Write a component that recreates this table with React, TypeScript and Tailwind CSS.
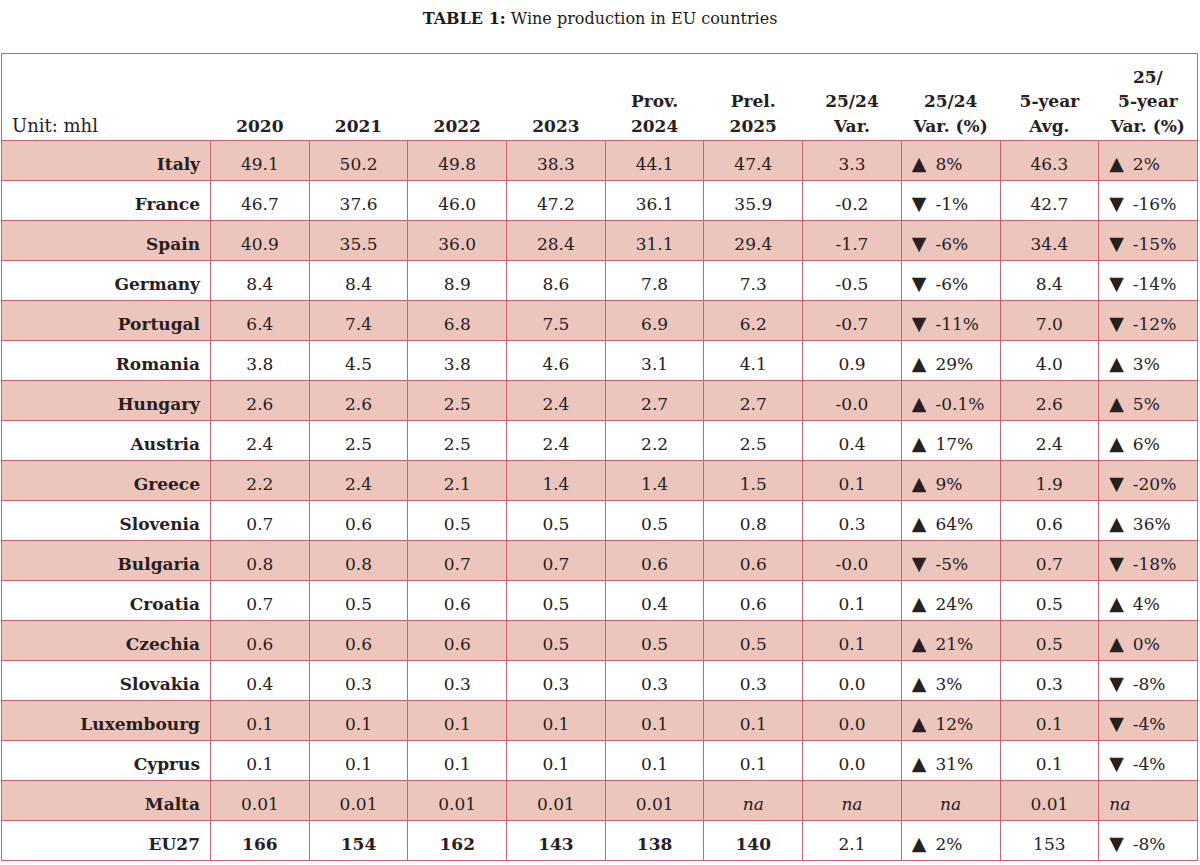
import React from "react";

type Row = {
  name: string;
  vals: string[];
  varAbs: string;
  varPct: string;
  avg: string;
  avgPct: string;
  bold?: boolean;
};

const rows: Row[] = [
  { name: "Italy", vals: ["49.1", "50.2", "49.8", "38.3", "44.1", "47.4"], varAbs: "3.3", varPct: "▲ 8%", avg: "46.3", avgPct: "▲ 2%" },
  { name: "France", vals: ["46.7", "37.6", "46.0", "47.2", "36.1", "35.9"], varAbs: "-0.2", varPct: "▼ -1%", avg: "42.7", avgPct: "▼ -16%" },
  { name: "Spain", vals: ["40.9", "35.5", "36.0", "28.4", "31.1", "29.4"], varAbs: "-1.7", varPct: "▼ -6%", avg: "34.4", avgPct: "▼ -15%" },
  { name: "Germany", vals: ["8.4", "8.4", "8.9", "8.6", "7.8", "7.3"], varAbs: "-0.5", varPct: "▼ -6%", avg: "8.4", avgPct: "▼ -14%" },
  { name: "Portugal", vals: ["6.4", "7.4", "6.8", "7.5", "6.9", "6.2"], varAbs: "-0.7", varPct: "▼ -11%", avg: "7.0", avgPct: "▼ -12%" },
  { name: "Romania", vals: ["3.8", "4.5", "3.8", "4.6", "3.1", "4.1"], varAbs: "0.9", varPct: "▲ 29%", avg: "4.0", avgPct: "▲ 3%" },
  { name: "Hungary", vals: ["2.6", "2.6", "2.5", "2.4", "2.7", "2.7"], varAbs: "-0.0", varPct: "▲ -0.1%", avg: "2.6", avgPct: "▲ 5%" },
  { name: "Austria", vals: ["2.4", "2.5", "2.5", "2.4", "2.2", "2.5"], varAbs: "0.4", varPct: "▲ 17%", avg: "2.4", avgPct: "▲ 6%" },
  { name: "Greece", vals: ["2.2", "2.4", "2.1", "1.4", "1.4", "1.5"], varAbs: "0.1", varPct: "▲ 9%", avg: "1.9", avgPct: "▼ -20%" },
  { name: "Slovenia", vals: ["0.7", "0.6", "0.5", "0.5", "0.5", "0.8"], varAbs: "0.3", varPct: "▲ 64%", avg: "0.6", avgPct: "▲ 36%" },
  { name: "Bulgaria", vals: ["0.8", "0.8", "0.7", "0.7", "0.6", "0.6"], varAbs: "-0.0", varPct: "▼ -5%", avg: "0.7", avgPct: "▼ -18%" },
  { name: "Croatia", vals: ["0.7", "0.5", "0.6", "0.5", "0.4", "0.6"], varAbs: "0.1", varPct: "▲ 24%", avg: "0.5", avgPct: "▲ 4%" },
  { name: "Czechia", vals: ["0.6", "0.6", "0.6", "0.5", "0.5", "0.5"], varAbs: "0.1", varPct: "▲ 21%", avg: "0.5", avgPct: "▲ 0%" },
  { name: "Slovakia", vals: ["0.4", "0.3", "0.3", "0.3", "0.3", "0.3"], varAbs: "0.0", varPct: "▲ 3%", avg: "0.3", avgPct: "▼ -8%" },
  { name: "Luxembourg", vals: ["0.1", "0.1", "0.1", "0.1", "0.1", "0.1"], varAbs: "0.0", varPct: "▲ 12%", avg: "0.1", avgPct: "▼ -4%" },
  { name: "Cyprus", vals: ["0.1", "0.1", "0.1", "0.1", "0.1", "0.1"], varAbs: "0.0", varPct: "▲ 31%", avg: "0.1", avgPct: "▼ -4%" },
  { name: "Malta", vals: ["0.01", "0.01", "0.01", "0.01", "0.01", "na"], varAbs: "na", varPct: "na", avg: "0.01", avgPct: "na" },
  { name: "EU27", vals: ["166", "154", "162", "143", "138", "140"], varAbs: "2.1", varPct: "▲ 2%", avg: "153", avgPct: "▼ -8%", bold: true },
];

const headers = [
  ["2020"],
  ["2021"],
  ["2022"],
  ["2023"],
  ["Prov.", "2024"],
  ["Prel.", "2025"],
  ["25/24", "Var."],
  ["25/24", "Var. (%)"],
  ["5-year", "Avg."],
  ["25/", "5-year", "Var. (%)"],
];

function Cell({ v, bold, left }: { v: string; bold?: boolean; left?: boolean }) {
  const na = v === "na";
  const arrow = v.startsWith("▲") || v.startsWith("▼");
  return (
    <td
      className={
        "border border-[#cc6070] p-0 pt-[8px] h-[40px] " +
        (left ? "text-left pl-[10px] " : "text-center ") +
        (bold ? "font-bold " : "") +
        (na ? "italic" : "")
      }
    >
      {arrow ? (
        <>
          <span className="text-[19px] leading-none mr-[9px]">{v.slice(0, 1)}</span>
          {v.slice(2)}
        </>
      ) : (
        v
      )}
    </td>
  );
}

export default function App() {
  return (
    <div
      className="bg-white w-[1200px] h-[865px] text-[#27201e] pt-[8px]"
      style={{ fontFamily: '"DejaVu Serif", serif' }}
    >
      <div className="text-center text-[16px] leading-[22px] mb-[23px] text-[#1f1a19]">
        <span className="font-bold">TABLE 1:</span> Wine production in EU countries
      </div>
      <table className="ml-[1px] w-[1197px] table-fixed border-collapse border border-[#cc6070] text-[17px]">
        <colgroup>
          <col className="w-[209px]" />
          {headers.map((_, i) => (
            <col key={i} />
          ))}
        </colgroup>
        <thead>
          <tr className="h-[87px] border-b border-[#cc6070]">
            <th className="text-left align-bottom font-normal text-[18px] pl-[10px] pb-[2px] leading-[24.5px]">
              Unit: mhl
            </th>
            {headers.map((h, i) => (
              <th key={i} className="align-bottom font-bold pb-[2px] leading-[24.5px] text-center">
                {h.map((line, j) => (
                  <div key={j}>{line}</div>
                ))}
              </th>
            ))}
          </tr>
        </thead>
        <tbody>
          {rows.map((r, i) => (
            <tr key={r.name} className={i % 2 === 0 ? "bg-[#ecc6bd]" : "bg-white"}>
              <td className="border border-[#cc6070] text-right font-bold pr-[10px] pt-[8px] h-[40px]">
                {r.name}
              </td>
              {r.vals.map((v, j) => (
                <Cell key={j} v={v} bold={r.bold} />
              ))}
              <Cell v={r.varAbs} />
              <Cell v={r.varPct} left={r.varPct !== "na"} />
              <Cell v={r.avg} />
              <Cell v={r.avgPct} left />
            </tr>
          ))}
        </tbody>
      </table>
    </div>
  );
}
